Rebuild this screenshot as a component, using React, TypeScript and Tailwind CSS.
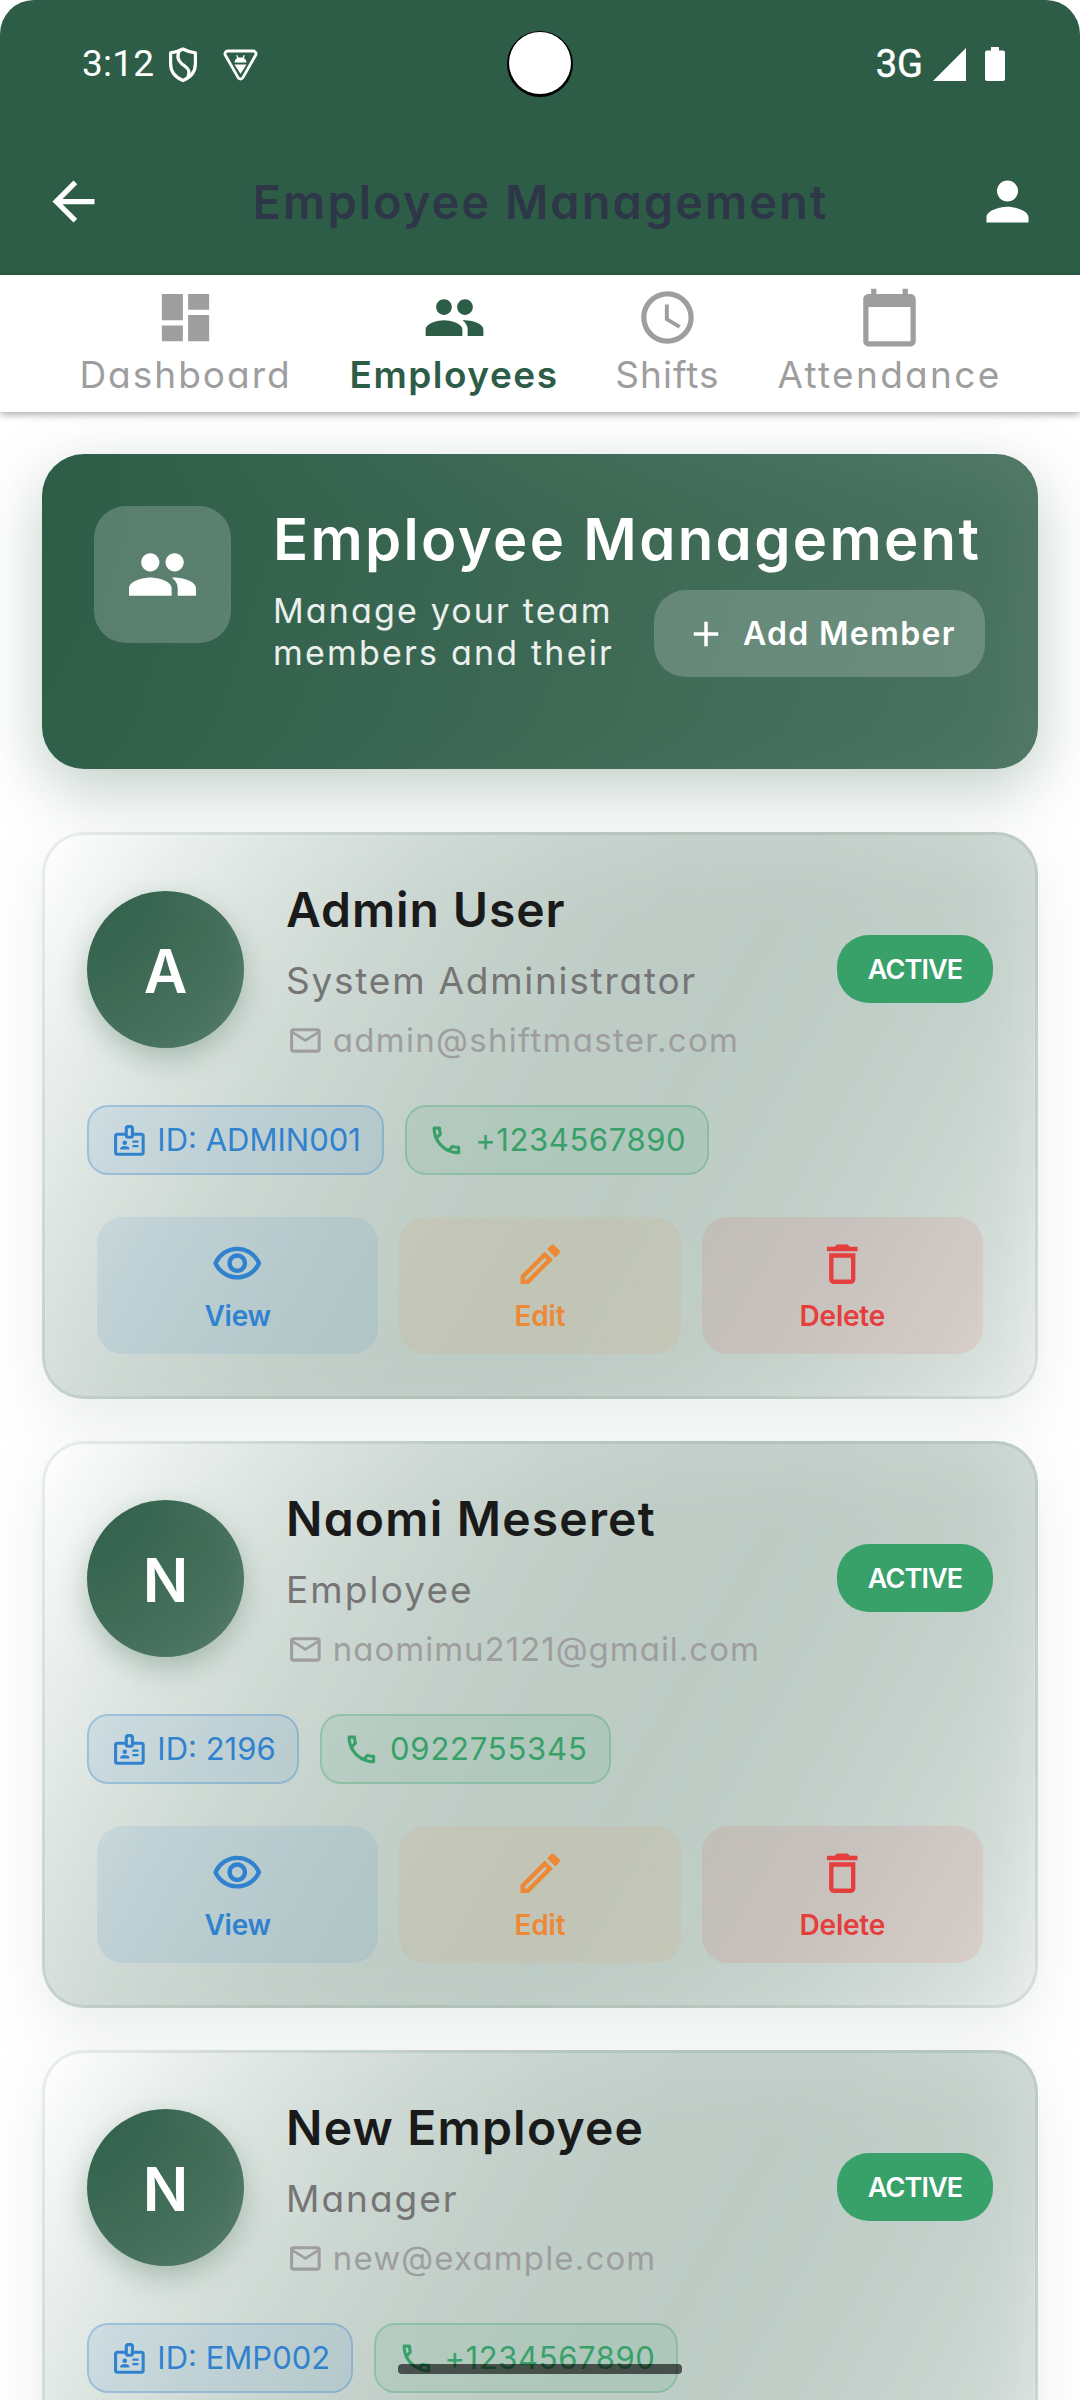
import type { ReactNode } from "react";
import {
  MdAccessTime,
  MdAdd,
  MdArrowBack,
  MdCalendarToday,
  MdDashboard,
  MdDeleteOutline,
  MdMailOutline,
  MdOutlineBadge,
  MdOutlineEdit,
  MdOutlinePhone,
  MdOutlineVisibility,
  MdPeople,
  MdPerson,
} from "react-icons/md";

type Employee = {
  initial: string;
  name: string;
  nameClass: string;
  role: string;
  roleClass: string;
  email: string;
  emailClass: string;
  id: string;
  phone: string;
  phoneClass: string;
  actions: boolean;
};

const employees: Employee[] = [
  {
    initial: "A",
    name: "Admin User",
    nameClass: "tracking-[0.9px]",
    role: "System Administrator",
    roleClass: "tracking-[1.75px]",
    email: "admin@shiftmaster.com",
    emailClass: "tracking-[1.3px]",
    id: "ID: ADMIN001",
    phone: "+1234567890",
    phoneClass: "tracking-[0.6px]",
    actions: true,
  },
  {
    initial: "N",
    name: "Naomi Meseret",
    nameClass: "tracking-[1.2px]",
    role: "Employee",
    roleClass: "tracking-[2.1px]",
    email: "naomimu2121@gmail.com",
    emailClass: "tracking-[1px]",
    id: "ID: 2196",
    phone: "0922755345",
    phoneClass: "tracking-[0.8px]",
    actions: true,
  },
  {
    initial: "N",
    name: "New Employee",
    nameClass: "tracking-[1.2px]",
    role: "Manager",
    roleClass: "tracking-[2px]",
    email: "new@example.com",
    emailClass: "tracking-[1.15px]",
    id: "ID: EMP002",
    phone: "+1234567890",
    phoneClass: "tracking-[0.6px]",
    actions: false,
  },
];

function ShieldIcon() {
  return (
    <svg width="30" height="36" viewBox="0 0 30 36" fill="none" stroke="white" strokeWidth="3.2" strokeLinejoin="round">
      <path d="M15 2 C11.5 4 7 5.4 2.6 5.8 V16.5 C2.6 24.5 7.5 30.5 15 33.6 C22.5 30.5 27.4 24.5 27.4 16.5 V5.8 C23 5.4 18.5 4 15 2 Z" />
      <path d="M11.6 3.5 C8.8 8.5 9.2 12.6 13.4 16.4 C18.6 20.6 23.4 22.6 19.8 30.4" />
    </svg>
  );
}

function BugTriangleIcon() {
  return (
    <svg width="35" height="32" viewBox="0 0 35 32">
      <path
        d="M5 2 H30 C32.5 2 33.8 4.2 32.6 6.3 L20 28.4 C18.8 30.5 16.2 30.5 15 28.4 L2.4 6.3 C1.2 4.2 2.5 2 5 2 Z"
        fill="none"
        stroke="white"
        strokeWidth="2.8"
      />
      <path d="M11.5 13.6 C11.7 11.2 12.8 9.6 14.2 8.9 L12.9 6.2 H14.3 L15.4 8.5 H19.6 L20.7 6.2 H22.1 L20.8 8.9 C22.2 9.6 23.3 11.2 23.5 13.6 Z" fill="white" />
      <path d="M11.5 15.6 H23.5 L17.5 25 Z" fill="white" />
    </svg>
  );
}

function StatusBar() {
  return (
    <div className="flex h-[128px] items-center justify-between pr-[75px] pl-[82px] font-['Roboto',sans-serif] text-[37px] text-white">
      <div className="flex items-center">
        <span className="w-[86px] leading-[40px] tracking-[0.2px]">3:12</span>
        <div className="mt-[2px] flex items-center">
          <ShieldIcon />
          <div className="ml-[25px]">
            <BugTriangleIcon />
          </div>
        </div>
      </div>
      <div className="flex items-center">
        <span className="mr-[10px] text-[38px] leading-[40px] [-webkit-text-stroke:0.5px_white]">3G</span>
        <svg width="33" height="33" viewBox="0 0 33 33" fill="white">
          <path d="M33 0 V33 H0 Z" />
        </svg>
        <svg className="ml-[19px]" width="20" height="34" viewBox="0 0 20 34" fill="white">
          <path d="M6 0 H14 V3.5 H18 A2 2 0 0 1 20 5.5 V32 A2 2 0 0 1 18 34 H2 A2 2 0 0 1 0 32 V5.5 A2 2 0 0 1 2 3.5 H6 Z" />
        </svg>
      </div>
    </div>
  );
}

function Header() {
  return (
    <header className="relative h-[275px] rounded-t-[34px] bg-[#2d5d47]">
      <StatusBar />
      <div className="absolute top-[31px] left-[507px] size-[66px] rounded-full bg-black">
        <div className="ml-[2px] size-[62px] translate-y-px rounded-full bg-white" />
      </div>
      <div className="flex h-[147px] items-center justify-between pr-[41px] pl-[42px]">
        <MdArrowBack className="size-[63px] text-white" />
        <h1 className="text-[47px] leading-[60px] font-semibold tracking-[2px] text-[#2d3748]">Employee Management</h1>
        <MdPerson className="size-[63px] text-white" />
      </div>
    </header>
  );
}

function Tab({ icon, label, className }: { icon: ReactNode; label: string; className: string }) {
  return (
    <div className={`flex flex-col items-center whitespace-nowrap ${className}`}>
      {icon}
      <span className="mt-[4px] text-[37px] leading-[44px]">{label}</span>
    </div>
  );
}

function Tabs() {
  return (
    <nav className="relative z-10 flex h-[137px] justify-center gap-[60px] bg-white pt-[11px] text-[#9e9e9e] shadow-[0_3px_7px_rgba(0,0,0,0.3)]">
      <Tab className="w-[212px] tracking-[2px]" label="Dashboard" icon={<MdDashboard className="size-[63px]" />} />
      <Tab className="w-[205px] font-[560] tracking-[1.5px] text-[#2d5d47]" label="Employees" icon={<MdPeople className="size-[63px]" />} />
      <Tab className="w-[102px] tracking-[1px]" label="Shifts" icon={<MdAccessTime className="size-[63px]" />} />
      <Tab className="w-[222px] tracking-[2.3px]" label="Attendance" icon={<MdCalendarToday className="size-[63px]" />} />
    </nav>
  );
}

function Hero() {
  return (
    <section className="relative isolate">
      <div className="absolute inset-0 -z-10 translate-y-[21px] rounded-[42px] bg-[#2d5d47]/30 blur-[32px]" />
      <div className="flex h-[315px] rounded-[42px] bg-[linear-gradient(107.6deg,#2d5d47,rgba(45,93,71,0.8))] pt-[52px] pr-[53px] pl-[52px] text-white">
        <div className="flex size-[137px] shrink-0 items-center justify-center rounded-[32px] bg-white/20">
          <MdPeople className="size-[73px]" />
        </div>
        <div className="ml-[42px] flex-1">
          <h2 className="text-[58px] leading-[66px] font-[560] tracking-[2.35px] whitespace-nowrap">Employee Management</h2>
          <div className="mt-[18px] flex items-start justify-between">
            <p className="text-[34px] leading-[42px] whitespace-nowrap text-white/90">
              <span className="block tracking-[2.15px]">Manage your team</span>
              <span className="block tracking-[2.2px]">members and their</span>
            </p>
            <button className="flex h-[87px] w-[331px] items-center rounded-[32px] bg-white/20 pl-[31px] text-[32px] font-[560] tracking-[1.3px]">
              <MdAdd className="size-[42px]" />
              <span className="ml-[16px] whitespace-nowrap">Add Member</span>
            </button>
          </div>
        </div>
      </div>
    </section>
  );
}

function Chip({ icon, children, className }: { icon: ReactNode; children: ReactNode; className: string }) {
  return (
    <div className={`flex h-[70px] items-center rounded-[21px] border-2 pr-[21px] pl-[21.6px] text-[31px] whitespace-nowrap ${className}`}>
      {icon}
      <span className="ml-[10px]">{children}</span>
    </div>
  );
}

function Action({ icon, label, className }: { icon: ReactNode; label: string; className: string }) {
  return (
    <button className={`flex h-[137px] flex-1 flex-col items-center rounded-[26px] pt-[21px] text-[28px] font-[560] tracking-[-0.2px] ${className}`}>
      {icon}
      <span className="mt-[7px] leading-[36px]">{label}</span>
    </button>
  );
}

function EmployeeCard({ e }: { e: Employee }) {
  return (
    <article className="relative isolate">
      <div className="absolute inset-0 -z-10 translate-y-[21px] rounded-[42px] bg-[#2d5d47]/10 blur-[32px]" />
      {/* Straight-alpha blend from white to 5% green, sampled every tenth. */}
      <div className="h-[567px] rounded-[42px] border-[3px] border-[#2d5d47]/10 bg-[linear-gradient(119.6deg,rgb(255,255,255)_0%,rgba(234,239,237,0.905)_10%,rgba(213,223,218,0.81)_20%,rgba(192,206,200,0.715)_30%,rgba(171,190,181,0.62)_40%,rgba(150,174,163,0.525)_50%,rgba(129,158,145,0.43)_60%,rgba(108,142,126,0.335)_70%,rgba(87,125,108,0.24)_80%,rgba(66,109,89,0.145)_90%,rgba(45,93,71,0.05)_100%)] bg-origin-border px-[42px] pt-[42px]">
        <div className="flex h-[185px] items-center">
          <div className="relative isolate size-[157px] shrink-0">
            <div className="absolute inset-0 -z-10 translate-y-[10.5px] rounded-full bg-[#2d5d47]/30 blur-[14px]" />
            <div className="flex size-full items-center justify-center rounded-full bg-[linear-gradient(135deg,#2d5d47,rgba(45,93,71,0.7))] pt-[2px] text-[60px] font-[560] text-white">
              {e.initial}
            </div>
          </div>
          <div className="ml-[42px] flex-1 whitespace-nowrap">
            <div className={`text-[48px] leading-[65px] font-[560] text-[#1a1a1a] ${e.nameClass}`}>{e.name}</div>
            <div className={`mt-[11px] text-[37px] leading-[56px] text-[#757575] ${e.roleClass}`}>{e.role}</div>
            <div className="mt-[10.5px] flex h-[42px] items-center text-[33px] text-[#9e9e9e]">
              <MdMailOutline className="ml-px size-[36.75px]" />
              <span className={`ml-[9px] ${e.emailClass}`}>{e.email}</span>
            </div>
          </div>
          <div className="-mt-px flex h-[68px] w-[156px] shrink-0 items-center justify-center rounded-[32px] bg-[#38a169] pt-[2px] text-[27px] font-[560] tracking-[-0.9px] text-white">
            ACTIVE
          </div>
        </div>
        <div className="mt-[43px] flex gap-[21px]">
          <Chip className="border-[#3182ce]/30 bg-[#3182ce]/10 text-[#3182ce]" icon={<MdOutlineBadge className="size-[36.75px]" />}>
            {e.id}
          </Chip>
          <Chip className={`border-[#38a169]/30 bg-[#38a169]/10 text-[#38a169] ${e.phoneClass}`} icon={<MdOutlinePhone className="size-[36.75px]" />}>
            {e.phone}
          </Chip>
        </div>
        {e.actions && (
          <div className="mt-[42px] flex gap-[21px] px-[10px]">
            <Action className="bg-[#3182ce]/10 text-[#3182ce]" label="View" icon={<MdOutlineVisibility className="size-[52.5px]" />} />
            <Action className="bg-[#ed8936]/10 text-[#ed8936]" label="Edit" icon={<MdOutlineEdit className="size-[52.5px]" />} />
            <Action className="bg-[#e53e3e]/10 text-[#e53e3e]" label="Delete" icon={<MdDeleteOutline className="size-[52.5px]" />} />
          </div>
        )}
      </div>
    </article>
  );
}

export default function App() {
  return (
    <div className="relative h-[2400px] w-[1080px] overflow-hidden bg-white font-['Inter',sans-serif] [font-feature-settings:'cv11']">
      <Header />
      <Tabs />
      <main className="px-[42px] pt-[42px]">
        <Hero />
        <div className="mt-[63px] flex flex-col gap-[42px]">
          {employees.map((e) => (
            <EmployeeCard key={e.email} e={e} />
          ))}
        </div>
      </main>
      <div className="absolute top-[2364px] left-[398px] h-[10px] w-[284px] rounded-[4px] bg-black/60" />
    </div>
  );
}
